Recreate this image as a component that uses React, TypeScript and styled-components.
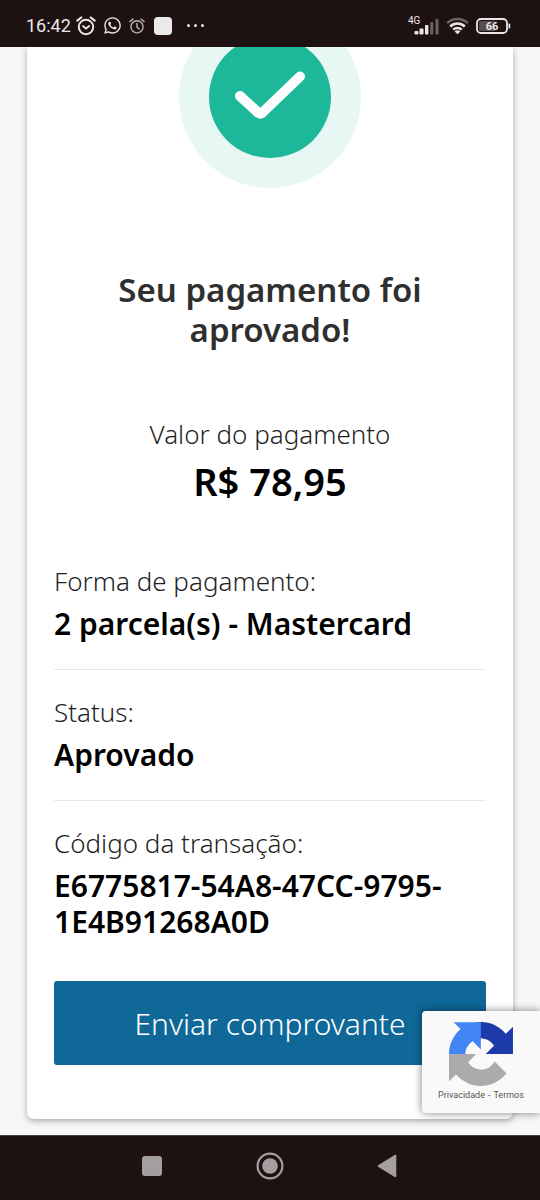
import React from "react";
import styled, { createGlobalStyle } from "styled-components";
import { FaWhatsapp } from "react-icons/fa";

const GlobalStyle = createGlobalStyle`
  *, *::before, *::after { box-sizing: border-box; }
  body {
    margin: 0;
    background: #f7f7f7;
    font-family: "Noto Sans", "Open Sans", sans-serif;
  }
`;

const Screen = styled.div`
  display: flex;
  flex-direction: column;
  min-height: 100vh;
`;

const StatusBar = styled.header`
  display: flex;
  align-items: center;
  justify-content: space-between;
  height: 47px;
  padding: 4px 29px 0 26px;
  background: #1d1112;
  color: #ebe7e7;
  font-family: Roboto, sans-serif;
`;

const StatusGroup = styled.div`
  display: flex;
  align-items: center;
  gap: 7px;
`;

const Clock = styled.time`
  font-size: 18px;
  line-height: 24px;
  margin-right: 5px;
`;

const ClockGroup = styled.div`
  display: flex;
  align-items: center;
`;

const AppSquare = styled.span`
  width: 18px;
  height: 18px;
  margin-left: 2px;
  border-radius: 4px;
  background: #ebe9e9;
`;

const Dots = styled.span`
  display: flex;
  gap: 4px;
  margin-left: 8px;

  i {
    width: 3px;
    height: 3px;
    border-radius: 50%;
    background: #ebe7e7;
  }
`;

const Page = styled.main`
  position: relative;
  flex: 1;
  overflow: hidden;
  padding: 0 27px 16px;
`;

const Card = styled.article`
  display: flex;
  flex-direction: column;
  padding: 0 27px 54px;
  background: #fff;
  border-radius: 0 0 7px 7px;
  box-shadow: 0 2px 6px rgba(0, 0, 0, 0.32);
`;

const Halo = styled.div`
  display: flex;
  align-items: center;
  justify-content: center;
  align-self: center;
  width: 182px;
  height: 182px;
  margin-top: -41px;
  border-radius: 50%;
  background: #e7f7f4;
`;

const Disc = styled.div`
  width: 122px;
  height: 122px;
  border-radius: 50%;
  background: #1db899;
`;

const Title = styled.h1`
  margin: 82px 0 66px;
  color: #2f2f2f;
  font-size: 33px;
  font-weight: 600;
  line-height: 40px;
  text-align: center;
`;

const Total = styled.div`
  margin-bottom: 34px;
  text-align: center;
`;

const Label = styled.div`
  color: #1f1f1f;
  font-size: 26px;
  font-weight: 300;
  line-height: 36px;
`;

const Amount = styled.div`
  margin-top: 5px;
  color: #000;
  font-size: 38px;
  font-weight: 600;
  line-height: 48px;
`;

const Row = styled.section`
  padding: 24px 0 27px;

  & + & {
    border-top: 1px solid #e8e8e8;
  }
`;

const Value = styled.div`
  margin-top: 7px;
  color: #000;
  font-size: 30px;
  font-weight: 600;
  line-height: 36px;
  overflow-wrap: anywhere;
`;

const SendButton = styled.button`
  height: 84px;
  margin-top: 14px;
  border: 0;
  border-radius: 3px;
  background: #0f6898;
  color: #fff;
  font-family: inherit;
  font-size: 30px;
  font-weight: 300;
  cursor: pointer;
`;

const Badge = styled.aside`
  position: absolute;
  right: 0;
  bottom: 22px;
  display: flex;
  flex-direction: column;
  align-items: center;
  width: 118px;
  height: 102px;
  padding-top: 11px;
  border-radius: 4px 0 0 4px;
  background: #f9f9f9;
  box-shadow: 0 0 8px rgba(0, 0, 0, 0.5);
`;

const BadgeLinks = styled.div`
  display: flex;
  gap: 3px;
  margin-top: 3px;
  color: #555;
  font-family: Roboto, sans-serif;
  font-size: 9px;
  line-height: 12px;

  a {
    color: inherit;
    text-decoration: none;
  }
`;

const NavBar = styled.nav`
  display: flex;
  align-items: center;
  justify-content: center;
  gap: 91px;
  height: 65px;
  padding-bottom: 4px;
  border-top: 1px solid #484041;
  background: #1d1112;
`;

const NavButton = styled.button`
  display: flex;
  padding: 0;
  border: 0;
  background: none;
  cursor: pointer;
`;

const AlarmIcon = () => (
  <svg width="20" height="20" viewBox="0 0 20 20" fill="none" stroke="currentColor" strokeWidth="2" strokeLinecap="round">
    <circle cx="10" cy="11" r="7.2" />
    <path d="M1.3 4.6 5.2 1.5M18.7 4.6 14.8 1.5" strokeWidth="2.2" />
    <path d="m7 10 3 2.6 3.2-2.6" strokeWidth="1.8" />
  </svg>
);

const ThinAlarmIcon = () => (
  <svg width="16" height="18" viewBox="0 0 16 18" fill="none" stroke="#b9b3b4" strokeWidth="1.4" strokeLinecap="round">
    <circle cx="8" cy="9.8" r="6.1" />
    <path d="M.9 4.6 4 2M15.1 4.6 12 2" />
    <path d="M8 6.4v3.7l2.2 1.9" />
  </svg>
);

const SignalIcon = () => (
  <svg width="31" height="22" viewBox="0 0 31 22" fill="currentColor">
    <text x="0" y="9" fontFamily="Roboto, sans-serif" fontSize="10">4G</text>
    <rect x="6.5" y="16" width="4" height="3.5" rx="1" />
    <rect x="11.5" y="13.5" width="4" height="6" rx="1" />
    <rect x="17" y="10" width="3.4" height="9.5" rx="1" />
    <rect x="22.3" y="7" width="3" height="12.5" rx="1" opacity=".38" />
    <rect x="27.5" y="4" width="3" height="15.5" rx="1" opacity=".38" />
  </svg>
);

const WifiIcon = () => (
  <svg width="23" height="18" viewBox="0 0 23 18" fill="none" stroke="currentColor" strokeWidth="2.5">
    <path d="M1.2 6.2a15 15 0 0 1 20.6 0" opacity=".38" />
    <path d="M4.2 9.5a10.6 10.6 0 0 1 14.6 0" />
    <path d="M7.2 12.7a6.3 6.3 0 0 1 8.6 0" />
    <path d="M8.7 14.4a4.2 4.2 0 0 1 5.6 0L11.5 17.2z" fill="currentColor" stroke="none" />
  </svg>
);

const BatteryIcon = () => (
  <svg width="35" height="16" viewBox="0 0 35 16">
    <rect x="1" y="1" width="30" height="14" rx="4" fill="none" stroke="#ebe7e7" strokeWidth="1.8" />
    <path d="M5 3h14v10H5a2 2 0 0 1-2-2V5a2 2 0 0 1 2-2z" fill="#574d4e" />
    <path d="M32.5 5.5h.7q1 0 1 1v3q0 1-1 1h-.7z" fill="#ebe7e7" />
    <text x="16" y="12" textAnchor="middle" fontFamily="Roboto, sans-serif" fontSize="11" fontWeight="700" fill="#ebe7e7">66</text>
  </svg>
);

const CheckIcon = () => (
  <svg width="122" height="122" viewBox="0 0 122 122" fill="none" stroke="#fff" strokeWidth="10" strokeLinecap="round" strokeLinejoin="round">
    <path d="M31 60 49.5 77Q51.3 78.3 53 77L91 40.5" />
  </svg>
);

const RecaptchaLogo = () => (
  <svg width="64" height="64" viewBox="0 0 64 64" role="img" aria-label="reCAPTCHA">
    <path fill="#1c3aa9" d="M64 31.955l-.033-1.37V4.687l-7.16 7.16C50.948 4.674 42.033.093 32.05.093c-10.4 0-19.622 4.96-25.458 12.64l11.736 11.86a15.55 15.55 0 0 1 4.754-5.334c2.05-1.6 4.952-2.906 8.968-2.906.485 0 .86.057 1.135.163 4.976.393 9.288 3.14 11.828 7.124l-8.307 8.307L64 31.953" />
    <path fill="#4285f4" d="M31.862.094l-1.37.033H4.594l7.16 7.16C4.58 13.147 0 22.06 0 32.046c0 10.4 4.96 19.622 12.64 25.458L24.5 45.768a15.55 15.55 0 0 1-5.334-4.754c-1.6-2.05-2.906-4.952-2.906-8.968 0-.485.057-.86.163-1.135.393-4.976 3.14-9.288 7.124-11.828l8.307 8.307L31.86.095" />
    <path fill="#ababab" d="M.001 32.045l.033 1.37v25.898l7.16-7.16c5.86 7.173 14.774 11.754 24.76 11.754 10.4 0 19.622-4.96 25.458-12.64l-11.736-11.86a15.55 15.55 0 0 1-4.754 5.334c-2.05 1.6-4.952 2.906-8.968 2.906-.485 0-.86-.057-1.135-.163-4.976-.393-9.288-3.14-11.828-7.124l8.307-8.307c-10.522.04-22.4.066-27.295-.005" />
  </svg>
);

const details = [
  { label: "Forma de pagamento:", value: "2 parcela(s) - Mastercard" },
  { label: "Status:", value: "Aprovado" },
  { label: "Código da transação:", value: "E6775817-54A8-47CC-9795-1E4B91268A0D" },
];

export default function App() {
  return (
    <Screen>
      <GlobalStyle />
      <StatusBar>
        <StatusGroup>
          <ClockGroup>
            <Clock>16:42</Clock>
            <AlarmIcon />
          </ClockGroup>
          <FaWhatsapp size={19} />
          <ThinAlarmIcon />
          <AppSquare />
          <Dots><i /><i /><i /></Dots>
        </StatusGroup>
        <StatusGroup>
          <SignalIcon />
          <WifiIcon />
          <BatteryIcon />
        </StatusGroup>
      </StatusBar>

      <Page>
        <Card>
          <Halo>
            <Disc><CheckIcon /></Disc>
          </Halo>
          <Title>Seu pagamento foi aprovado!</Title>
          <Total>
            <Label>Valor do pagamento</Label>
            <Amount>R$ 78,95</Amount>
          </Total>
          {details.map((d) => (
            <Row key={d.label}>
              <Label>{d.label}</Label>
              <Value>{d.value}</Value>
            </Row>
          ))}
          <SendButton type="button">Enviar comprovante</SendButton>
        </Card>
        <Badge>
          <RecaptchaLogo />
          <BadgeLinks>
            <a href="#privacidade">Privacidade</a>
            <span>-</span>
            <a href="#termos">Termos</a>
          </BadgeLinks>
        </Badge>
      </Page>

      <NavBar>
        <NavButton type="button" aria-label="Recentes">
          <svg width="26" height="28" viewBox="0 0 26 28"><rect x="3" y="4" width="20" height="20" rx="3" fill="#a59e9f" /></svg>
        </NavButton>
        <NavButton type="button" aria-label="Início">
          <svg width="28" height="28" viewBox="0 0 28 28">
            <circle cx="14" cy="14" r="12.4" fill="none" stroke="#a59e9f" strokeWidth="2.2" />
            <circle cx="14" cy="14" r="7.8" fill="#a59e9f" />
          </svg>
        </NavButton>
        <NavButton type="button" aria-label="Voltar">
          <svg width="26" height="28" viewBox="0 0 26 28"><path d="M3.5 14 20.5 3.5v21z" fill="#a59e9f" stroke="#a59e9f" strokeWidth="1.6" strokeLinejoin="round" /></svg>
        </NavButton>
      </NavBar>
    </Screen>
  );
}
